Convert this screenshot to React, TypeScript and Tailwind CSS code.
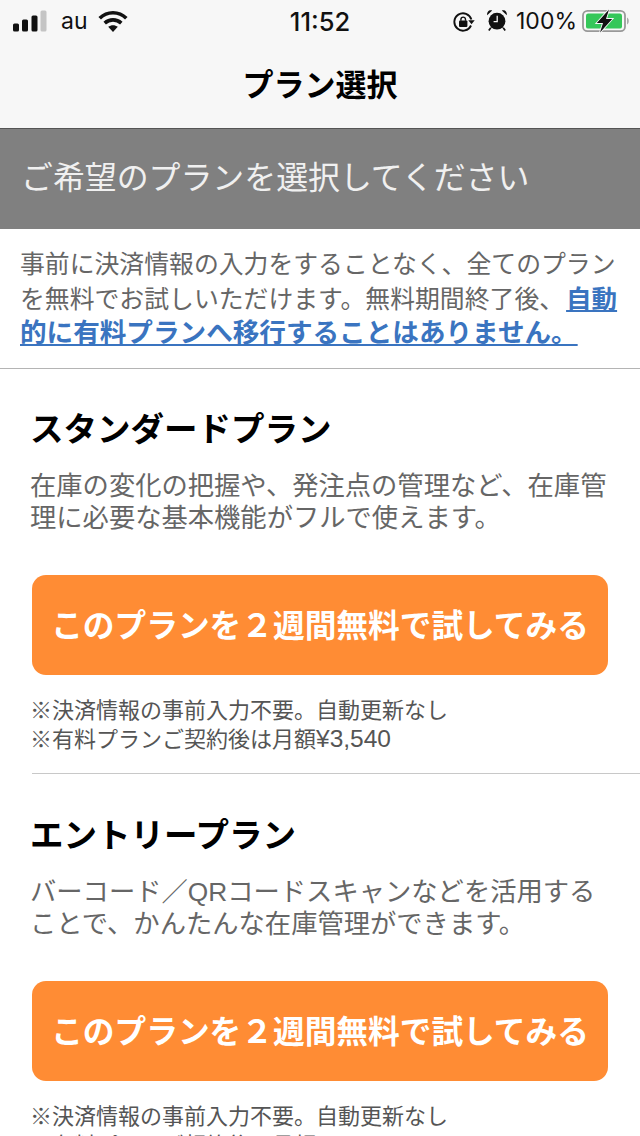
import React from 'react';

const jp = '[font-family:"Liberation_Sans","Noto_Sans_CJK_JP",sans-serif]';

function SignalIcon() {
  return (
    <svg width="34" height="22" viewBox="0 0 34 22">
      <rect x="0" y="13.500" width="6" height="8" rx="1.500" fill="#111" />
      <rect x="9" y="9.500" width="6" height="12" rx="1.500" fill="#111" />
      <rect x="18.500" y="5.500" width="6" height="16" rx="1.500" fill="#111" />
      <rect x="27.500" y="0.500" width="6" height="21" rx="1.500" fill="#c4c4c4" />
    </svg>
  );
}

function WifiIcon() {
  return (
    <svg width="30" height="22" viewBox="0 0 30 22" fill="none">
      <path d="M1.700 8.300C9.200 .9 20.800 .9 28.300 8.300" stroke="#111" strokeWidth="3.600" />
      <path d="M6.700 13.200c4.800-4.400 11.800-4.400 16.600 0" stroke="#111" strokeWidth="3.600" />
      <path d="M10.200 16.800c2.800-2.200 6.800-2.200 9.600 0L15 22z" fill="#111" />
    </svg>
  );
}

function RotationLockIcon() {
  return (
    <svg width="22" height="20" viewBox="0 0 22 20" fill="none">
      <path d="M18.400 7.500A8.700 8.700 0 1 0 18 13.500" stroke="#111" strokeWidth="1.900" />
      <path d="M15.300 8.200h6.400l-3.200 4z" fill="#111" />
      <rect x="6" y="8.600" width="8.400" height="6.400" rx="1" fill="#111" />
      <path d="M7.900 8.800V7.400a2.300 2.300 0 0 1 4.600 0v1.400" stroke="#111" strokeWidth="1.400" />
    </svg>
  );
}

function AlarmIcon() {
  return (
    <svg width="22" height="22" viewBox="0 0 22 22">
      <circle cx="11" cy="12.200" r="8.400" fill="#111" />
      <path d="M1.200 6.200C.6 2.700 3.200.4 6.200 1.400zM20.800 6.200C21.400 2.700 18.800.4 15.800 1.400z" fill="#111" />
      <path d="M4.800 18.800l-2 2.600M17.200 18.800l2 2.600" stroke="#111" strokeWidth="1.700" />
      <path d="M11.200 6.800v5.800H7.600" stroke="#f7f7f7" strokeWidth="1.300" fill="none" />
    </svg>
  );
}

function BatteryIcon() {
  return (
    <svg width="48" height="24" viewBox="0 0 48 24">
      <rect x="1" y="1.800" width="42" height="20.400" rx="4.500" fill="none" stroke="#999" strokeWidth="1.800" />
      <rect x="4" y="4.600" width="36" height="15" rx="2.200" fill="#35c759" />
      <path d="M45 8.500v7c1-.4 1.800-1.800 1.800-3.500S46 8.900 45 8.500z" fill="#aaa" />
      <path d="M27 .5 14.800 14h6.200L18 23.500 30.200 10H24z" fill="#111" stroke="#f7f7f7" strokeWidth="1.800" paintOrder="stroke" />
    </svg>
  );
}

function PlanSection({ name, body, price }: { name: string; body: string[]; price: string }) {
  return (
    <section className="flex flex-col pl-8 pr-8">
      <h2 className="-ml-[2px] h-[48px] text-[33.500px] leading-[48px] font-bold text-black whitespace-nowrap">{name}</h2>
      <p className="-ml-[2px] mt-[16px] text-[26.300px] leading-[32px] text-[#666666]">
        {body.map((line) => (
          <span key={line} className="block whitespace-nowrap">{line}</span>
        ))}
      </p>
      <button className="mt-[41px] pt-[4px] h-[100px] w-full rounded-[14px] bg-[#ff8c34] text-[31.700px] font-bold text-white whitespace-nowrap">
        このプランを２週間無料で試してみる
      </button>
      <p className="mt-[22px] -ml-[2px] text-[22px] text-[#555555]">
        <span className="block h-[28px] leading-[28px] whitespace-nowrap">※決済情報の事前入力不要。自動更新なし</span>
        <span className="block h-[28px] leading-[28px] whitespace-nowrap">
          ※有料プランご契約後は月額<span className="text-[24.500px]">{price}</span>
        </span>
      </p>
    </section>
  );
}

export default function App() {
  return (
    <div className={`h-[1136px] w-[640px] overflow-hidden bg-white ${jp}`}>
      {/* status bar + nav */}
      <header className="h-[129px] bg-[#f7f7f7] border-b border-[#555555] flex flex-col">
        <div className="h-[42px] flex items-center justify-between pl-[13px] pr-[10px] text-[#111] text-[23px]">
          <div className="w-[180px] flex items-center">
            <SignalIcon />
            <span className="ml-[14px] font-['Inter'] leading-none">au</span>
            <span className="ml-[10px] flex"><WifiIcon /></span>
          </div>
          <span className="mt-[1px] -ml-[3px] font-['Inter'] text-[25.500px] font-medium leading-none">11:52</span>
          <div className="w-[180px] flex items-center justify-end whitespace-nowrap">
            <span className="mt-[1px] flex"><RotationLockIcon /></span>
            <span className="ml-[11px] -mt-[2px] flex"><AlarmIcon /></span>
            <span className="ml-[8px] font-['Inter'] leading-none">100%</span>
            <span className="ml-[5px] flex"><BatteryIcon /></span>
          </div>
        </div>
        <h1 className="flex-1 flex items-center justify-center pt-[2px] text-[31px] font-bold text-black">プラン選択</h1>
      </header>

      <div className="h-[100px] bg-[#808080] flex items-center pl-[21px] text-[31.900px] text-[#f0f0f0] whitespace-nowrap">
        ご希望のプランを選択してください
      </div>

      <div className="h-[140px] pt-[19px] pl-[20px] border-b border-[#b4b4b4] text-[24.850px] text-[#666666]">
        <span className="block h-[34px] leading-[34px] whitespace-nowrap">事前に決済情報の入力をすることなく、全てのプラン</span>
        <span className="block h-[34px] leading-[34px] whitespace-nowrap">
          を無料でお試しいただけます。無料期間終了後、
          <a className="ml-[2px] text-[25.500px] font-bold text-[#3a74c0] underline">自動</a>
        </span>
        <a className="block h-[34px] leading-[34px] whitespace-nowrap text-[26.600px] font-bold text-[#3a74c0] underline">的に有料プランへ移行することはありません。</a>
      </div>

      <div className="pt-[37px]">
        <PlanSection
          name="スタンダードプラン"
          body={['在庫の変化の把握や、発注点の管理など、在庫管', '理に必要な基本機能がフルで使えます。']}
          price="¥3,540"
        />
        <div className="ml-8 mt-[20px] mb-[38px] border-b border-[#c8c8c8]" />
        <PlanSection
          name="エントリープラン"
          body={['バーコード／QRコードスキャンなどを活用する', 'ことで、かんたんな在庫管理ができます。']}
          price="¥1,180"
        />
      </div>
    </div>
  );
}
